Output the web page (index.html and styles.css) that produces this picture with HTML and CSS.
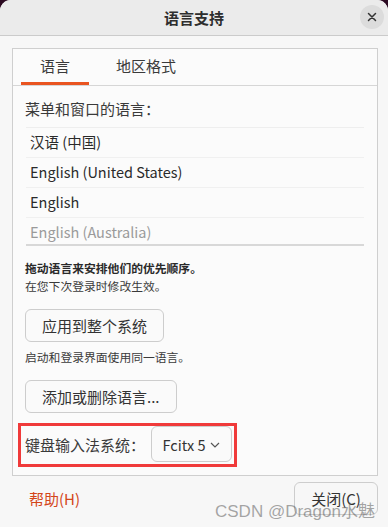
FILE: index.html
```html
<!DOCTYPE html>
<html lang="zh-CN">
<head>
<meta charset="utf-8">
<title>语言支持</title>
<link rel="stylesheet" href="styles.css">
</head>
<body>
<div class="window">
  <div class="titlebar">
    <span class="title">语言支持</span>
    <span class="close-btn">
      <svg width="10" height="10" viewBox="0 0 10 10"><path d="M1.5 1.5 L8.5 8.5 M8.5 1.5 L1.5 8.5" stroke="#333" stroke-width="1.5" stroke-linecap="round"/></svg>
    </span>
  </div>
  <div class="frame">
    <div class="tabs">
      <div class="tab active">语言</div>
      <div class="tab">地区格式</div>
    </div>
    <div class="page">
      <div class="label">菜单和窗口的语言：</div>
      <div class="list">
        <div class="row">汉语 (中国)</div>
        <div class="row">English (United States)</div>
        <div class="row">English</div>
        <div class="row dim">English (Australia)</div>
      </div>
      <div class="note bold">拖动语言来安排他们的优先顺序。</div>
      <div class="note">在您下次登录时修改生效。</div>
      <div class="btn btn-first">应用到整个系统</div>
      <div class="note note-gap">启动和登录界面使用同一语言。</div>
      <div class="btn btn-second">添加或删除语言...</div>
      <div class="ime-box">
        <span class="ime-label">键盘输入法系统：</span>
        <span class="combo">Fcitx 5
          <svg class="chev" width="10" height="6" viewBox="0 0 10 6"><path d="M1 1 L5 5 L9 1" fill="none" stroke="#555" stroke-width="1.2"/></svg>
        </span>
      </div>
    </div>
  </div>
  <div class="footer">
    <span class="help">帮助(H)</span>
    <span class="btn close">关闭(C)</span>
  </div>
  <div class="watermark">CSDN @Dragon水魅</div>
</div>
</body>
</html>
```
FILE: styles.css
```css
html, body {
  margin: 0;
  padding: 0;
  background: #2c0a22;
}
body {
  width: 388px;
  height: 527px;
  overflow: hidden;
  font-family: "Noto Sans CJK SC", "Noto Sans", sans-serif;
  color: #3a3a3a;
}
.window {
  position: relative;
  width: 388px;
  height: 527px;
  background: #f7f7f7;
  border-radius: 11px 11px 0 0;
  overflow: hidden;
}
.titlebar {
  height: 35px;
  background: #ebebeb;
  border-bottom: 1px solid #cbcbcb;
  display: flex;
  align-items: center;
  justify-content: center;
  position: relative;
}
.title {
  font-size: 15px;
  font-weight: bold;
  color: #2e2e2e;
}
.close-btn {
  position: absolute;
  right: 4px;
  top: 5px;
  width: 24px;
  height: 24px;
  border-radius: 50%;
  background: #dcdcdc;
  display: flex;
  align-items: center;
  justify-content: center;
}
.frame {
  margin: 12px 10px 0 12px;
  height: 426px;
  border: 1px solid #cfcfcf;
  background: #fbfbfb;
  display: flex;
  flex-direction: column;
}
.tabs {
  display: flex;
  gap: 8px;
  padding-left: 8px;
  border-bottom: 1px solid #d6d6d6;
  height: 36px;
}
.tab {
  padding: 0 19px;
  font-size: 15px;
  line-height: 33px;
  height: 33px;
  border-bottom: 3px solid transparent;
  color: #3a3a3a;
}
.tab.active {
  border-bottom-color: #e95420;
}
.page {
  padding: 13px 13px 0 12px;
  display: flex;
  flex-direction: column;
  align-items: flex-start;
}
.label {
  font-size: 15px;
  line-height: 20px;
}
.list {
  margin-top: 8px;
  margin-left: 1px;
  width: 338px;
  height: 116px;
  overflow: hidden;
  border-top: 1px solid #eeeeee;
  border-bottom: 2px solid #d8d8d8;
}
.row {
  height: 29px;
  line-height: 28px;
  padding-left: 4px;
  font-size: 14.5px;
  color: #2a2a2a;
  border-bottom: 1px solid #f0f0f0;
}
.row.dim {
  color: #9a9a9a;
}
.note {
  font-size: 11.8px;
  line-height: 18px;
  color: #3a3a3a;
}
.note.bold {
  margin-top: 13px;
  font-weight: bold;
  color: #2a2a2a;
}
.note-gap {
  margin-top: 6px;
}
.btn {
  box-sizing: border-box;
  height: 33px;
  padding: 0 16px;
  border: 1px solid #cdcdcd;
  border-radius: 6px;
  background: #fafafa;
  font-size: 15px;
  line-height: 31px;
  color: #333;
}
.btn-first {
  margin-top: 14px;
}
.btn-second {
  margin-top: 14px;
}
.ime-box {
  margin-top: 10px;
  margin-left: -7px;
  box-sizing: border-box;
  width: 219px;
  height: 44px;
  border: 3px solid #f03a3a;
  display: flex;
  align-items: center;
  justify-content: space-between;
  padding: 0 2px 2px 4px;
}
.ime-label {
  font-size: 15px;
  color: #3a3a3a;
}
.combo {
  box-sizing: border-box;
  width: 81px;
  height: 36px;
  border: 1px solid #cdcdcd;
  border-radius: 6px;
  background: #fafafa;
  display: flex;
  align-items: center;
  justify-content: center;
  gap: 5px;
  font-size: 14.5px;
  color: #333;
}
.chev {
  margin-top: 1px;
}
.footer {
  display: flex;
  justify-content: space-between;
  align-items: center;
  margin: 6px 10px 0 29px;
}
.help {
  font-size: 15px;
  color: #d4461a;
}
.btn.close {
  width: 84px;
  padding: 0;
  text-align: center;
  background: #f7f7f7;
}
.watermark {
  position: absolute;
  left: 215px;
  top: 497px;
  font-family: "Liberation Sans", "Noto Sans CJK SC", sans-serif;
  font-size: 17px;
  color: rgba(80, 80, 80, 0.5);
  white-space: nowrap;
}
```
